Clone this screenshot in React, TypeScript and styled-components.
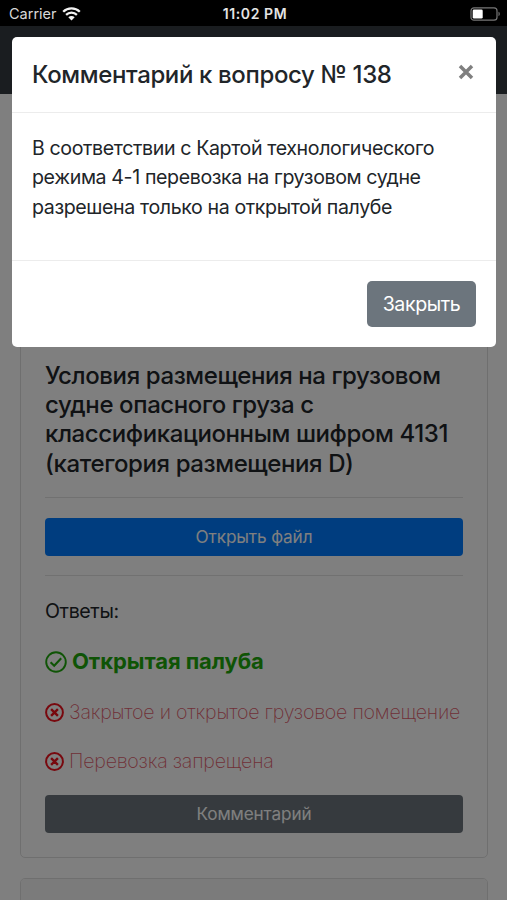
import React from "react";
import styled, { createGlobalStyle } from "styled-components";

const GlobalStyle = createGlobalStyle`
  *, *::before, *::after { box-sizing: border-box; }
  body {
    margin: 0;
    overflow: hidden;
    background: #000;
    color: #212529;
    font-family: Inter, "Liberation Sans", sans-serif;
    font-size: 19.6px;
    line-height: 29.4px;
    letter-spacing: -0.39px;
  }
`;

const Screen = styled.div`
  display: flex;
  flex-direction: column;
  width: 507px;
  height: 900px;
  overflow: hidden;
`;

const StatusBar = styled.header`
  display: grid;
  grid-template-columns: 1fr auto 1fr;
  align-items: center;
  flex: none;
  height: 26px;
  padding: 1px 6px 0 9px;
  background: #000;
  color: #d8d8d8;
  font-size: 14.5px;
  line-height: 26px;
`;

const Carrier = styled.div`
  display: flex;
  align-items: center;
  gap: 5px;
  letter-spacing: 0;
`;

const Clock = styled.div`
  color: #e4e4e4;
  font-weight: 600;
  font-size: 14px;
  letter-spacing: 0.6px;
`;

const Battery = styled.svg`
  justify-self: end;
`;

const Viewport = styled.div`
  position: relative;
  flex: 1;
  min-height: 0;
  overflow: hidden;
  background: #fff;
`;

const NavBar = styled.nav`
  height: 68px;
  background: #343a40;
`;

const Content = styled.main`
  display: flex;
  flex-direction: column;
  gap: 20px;
  padding: 20px 19px 0 20px;
`;

const Card = styled.article`
  flex: none;
  border: 1px solid #dfdfdf;
  border-radius: 5px;
  overflow: hidden;
`;

const CardHeader = styled.div<{ $height: number }>`
  height: ${(p) => p.$height}px;
  border-bottom: 1px solid #dfdfdf;
  background: #f7f7f7;
`;

const CardBody = styled.div`
  padding: 24.6px 24px 24px;
`;

const Question = styled.h5`
  margin: 0 0 -0.6px;
  font-size: 24px;
  font-weight: 500;
  line-height: 29.4px;
  white-space: nowrap;
`;

const Divider = styled.hr`
  height: 1px;
  margin: 19px 0 20px;
  border: 0;
  background: #e2e2e2;
`;

const BlockButton = styled.button<{ $color: string }>`
  display: block;
  width: 100%;
  height: 38px;
  padding: 0;
  border: 0;
  border-radius: 4px;
  background: ${(p) => p.$color};
  color: #fff;
  font: 400 17.2px/38px Inter, sans-serif;
  letter-spacing: -0.13px;
`;

const AnswersLabel = styled.p`
  margin: 0 0 21px;
  padding-top: 1px;
`;

const Answer = styled.div<{ $correct?: boolean }>`
  display: flex;
  align-items: center;
  gap: ${(p) => (p.$correct ? 5 : 5)}px;
  height: 30px;
  margin-bottom: ${(p) => (p.$correct ? 21 : 19)}px;
  color: ${(p) => (p.$correct ? "#1fa80c" : "#e0606d")};
  font-size: ${(p) => (p.$correct ? 22 : 19.6)}px;
  font-weight: ${(p) => (p.$correct ? 700 : 200)};
  letter-spacing: ${(p) => (p.$correct ? -0.08 : -0.22)}px;
  white-space: nowrap;

  &:last-of-type { margin-bottom: 18px; }
  svg { flex: none; margin-bottom: 1px; }
`;

const Backdrop = styled.div`
  position: absolute;
  inset: 0;
  padding: 11px 11px 0 12px;
  background: rgba(0, 0, 0, 0.5);
`;

const Dialog = styled.section`
  height: 310px;
  border-radius: 5px;
  background: #fff;
`;

const DialogHeader = styled.div`
  display: flex;
  justify-content: space-between;
  height: 76px;
  padding: 23px 20px 0;
  border-bottom: 1px solid #ececec;
`;

const DialogTitle = styled.h5`
  margin: 0;
  font-size: 24px;
  font-weight: 450;
  line-height: 29.4px;
  letter-spacing: -0.36px;
`;

const CloseButton = styled.button`
  display: flex;
  width: 20px;
  height: 24px;
  padding: 4px 2px;
  border: 0;
  background: transparent;
`;

const DialogBody = styled.div`
  height: 148px;
  padding: 21px 20px 20px;
  border-bottom: 1px solid #ececec;
  white-space: nowrap;
`;

const DialogFooter = styled.div`
  display: flex;
  justify-content: flex-end;
  padding: 20px 20px 0;
`;

const DismissButton = styled.button`
  width: 109px;
  height: 46px;
  padding: 0;
  border: 0;
  border-radius: 5px;
  background: #6c757d;
  color: #fff;
  font: 400 19.6px/47px Inter, sans-serif;
  letter-spacing: -0.4px;
`;

const WifiIcon = () => (
  <svg width="19" height="14" viewBox="0 0 19 14" fill="none" stroke="#f2f2f2" strokeWidth="2.3">
    <path d="M1.2 4.8C5.8 .3 13.2 .3 17.8 4.8M4.1 7.8c3-2.9 7.8-2.9 10.8 0" />
    <path d="M6.3 10.2c1.8-1.7 4.6-1.7 6.4 0L9.5 13.5Z" fill="#f2f2f2" stroke="none" />
  </svg>
);

const BatteryIcon = () => (
  <Battery width="31" height="14" viewBox="0 0 31 14">
    <rect x="1" y=".8" width="26" height="12.4" rx="3" fill="none" stroke="#777" strokeWidth="1.2" />
    <rect x="2.7" y="2.5" width="10" height="9" rx="1.3" fill="#fff" />
    <path d="M28.5 4.8c1.7.5 1.7 3.9 0 4.4Z" fill="#777" />
  </Battery>
);

const CheckIcon = () => (
  <svg width="22" height="22" viewBox="0 0 22 22" fill="none" stroke="#1fa80c">
    <circle cx="11" cy="11" r="9.8" strokeWidth="1.9" />
    <path d="m5.6 11.2 3.6 3.5 7-7.4" strokeWidth="2.1" />
  </svg>
);

const CrossIcon = () => (
  <svg width="19" height="19" viewBox="0 0 19 19" fill="none" stroke="#f0101c">
    <circle cx="9.5" cy="9.5" r="8.4" strokeWidth="2" />
    <path d="m6.1 6.1 6.8 6.8m0-6.8-6.8 6.8" strokeWidth="2.4" />
  </svg>
);

export default function App() {
  return (
    <Screen>
      <GlobalStyle />
      <StatusBar>
        <Carrier>Carrier<WifiIcon /></Carrier>
        <Clock>11:02 PM</Clock>
        <BatteryIcon />
      </StatusBar>
      <Viewport>
        <NavBar />
        <Content>
          <Card>
            <CardHeader $height={221} />
            <CardBody>
              <Question>
                Условия размещения на грузовом<br />
                судне опасного груза с<br />
                классификационным шифром 4131<br />
                (категория размещения D)
              </Question>
              <Divider />
              <BlockButton $color="#007bff">Открыть файл</BlockButton>
              <Divider />
              <AnswersLabel>Ответы:</AnswersLabel>
              <Answer $correct><CheckIcon />Открытая палуба</Answer>
              <Answer><CrossIcon />Закрытое и открытое грузовое помещение</Answer>
              <Answer><CrossIcon />Перевозка запрещена</Answer>
              <BlockButton $color="#6c757d">Комментарий</BlockButton>
            </CardBody>
          </Card>
          <Card><CardHeader $height={60} /></Card>
        </Content>
        <Backdrop>
          <Dialog role="dialog" aria-modal="true">
            <DialogHeader>
              <DialogTitle>Комментарий к вопросу № 138</DialogTitle>
              <CloseButton aria-label="Закрыть">
                <svg width="16" height="16" viewBox="0 0 16 16" stroke="#7f7f7f" strokeWidth="3.5">
                  <path d="m2 2 12 12m0-12L2 14" />
                </svg>
              </CloseButton>
            </DialogHeader>
            <DialogBody>
              В соответствии с Картой технологического<br />
              режима 4-1 перевозка на грузовом судне<br />
              разрешена только на открытой палубе
            </DialogBody>
            <DialogFooter><DismissButton>Закрыть</DismissButton></DialogFooter>
          </Dialog>
        </Backdrop>
      </Viewport>
    </Screen>
  );
}
